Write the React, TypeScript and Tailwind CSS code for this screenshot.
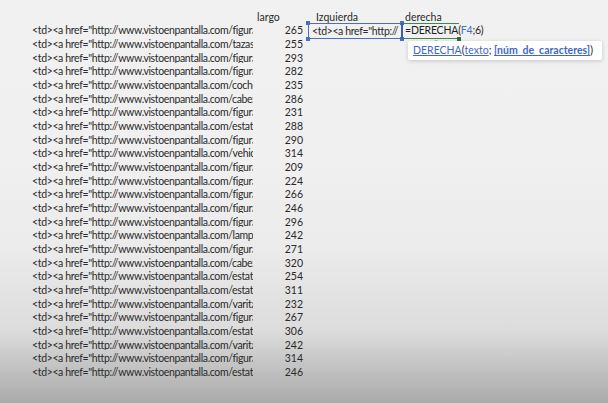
import React from "react";

const rows: [string, number][] = [
  ["figura", 265],
  ["tazas", 255],
  ["figura", 293],
  ["figura", 282],
  ["coche", 235],
  ["cabez", 286],
  ["figura", 231],
  ["estat", 288],
  ["figura", 290],
  ["vehic", 314],
  ["figura", 209],
  ["figura", 224],
  ["figura", 266],
  ["figura", 246],
  ["figura", 296],
  ["lamp", 242],
  ["figura", 271],
  ["cabez", 320],
  ["estat", 254],
  ["estat", 311],
  ["varita", 232],
  ["figura", 267],
  ["estat", 306],
  ["varita", 242],
  ["figura", 314],
  ["estat", 246],
];

const Sq = ({ cls }: { cls: string }) => (
  <span className={"absolute w-[4px] h-[4px] " + cls} />
);

export default function App() {
  return (
    <div className="relative w-[608px] h-[403px] overflow-hidden font-['Lato','Liberation_Sans',sans-serif] text-[10.5px] leading-none text-[#2a2a2a] bg-[linear-gradient(180deg,#f1f1f1_0%,#f0f0f0_40%,#ebebeb_62%,#dcdcdc_82%,#aaaaaa_100%)]">
      <div className="pt-[10px] pl-[32px]">
        <div className="grid grid-cols-[221px_55px_94px_160px] h-[13.68px] items-center">
          <div />
          <div className="pl-[4px]">largo</div>
          <div className="pl-[8px]">Izquierda</div>
          <div className="pl-[3px]">derecha</div>
        </div>
        {rows.map(([s, n], i) => (
          <div
            key={i}
            className="grid grid-cols-[221px_55px_94px_160px] h-[13.68px] items-center"
          >
            <div className="overflow-hidden whitespace-nowrap tracking-[-0.36px]">
              {'<td><a href="http://www.vistoenpantalla.com/' + s + 'a'}
            </div>
            <div className="text-right pr-[5px]">{n}</div>
            {i === 0 ? (
              <>
                <div className="relative h-full">
                  <div className="absolute left-0 right-0 -top-[1px] -bottom-[2px] border-[1.5px] border-[#4a6fc0]">
                    <div className="h-full flex items-center pl-[3px] overflow-hidden whitespace-nowrap tracking-[-0.36px]">
                      {'<td><a href="http://'}
                    </div>
                    <Sq cls="-left-[3px] -top-[3px] bg-[#4a6fc0]" />
                    <Sq cls="-left-[3px] -bottom-[3px] bg-[#4a6fc0]" />
                    <Sq cls="-right-[3px] -top-[3px] bg-[#4a6fc0]" />
                    <Sq cls="-right-[3px] -bottom-[3px] bg-[#4a6fc0]" />
                  </div>
                </div>
                <div className="relative h-full">
                  <div className="absolute left-0 w-[57px] -top-[1px] -bottom-[2px] border-t-[1.5px] border-b-[1.5px] border-[#3c8a4e]">
                    <span className="absolute -left-[1px] -top-[1px] -bottom-[1px] w-[2px] bg-[#3d5fb3]" />
                    <Sq cls="-right-[2px] -bottom-[3px] bg-[#2f6b3c]" />
                  </div>
                  <div className="absolute left-[3px] top-0 h-full flex items-center whitespace-nowrap text-[#1e1e1e] tracking-[-0.2px]">
                    =DERECHA(<span className="text-[#4a6fc0]">F4</span>;6)
                  </div>
                  <div className="absolute left-[32px] top-[15px] text-[7px] text-[#555]">⌶</div>
                </div>
              </>
            ) : (
              <>
                <div />
                <div />
              </>
            )}
          </div>
        ))}
      </div>

      <div className="absolute left-[408px] top-[41px] w-[194px] h-[19px] bg-white rounded-[2px] shadow-[0_1px_4px_rgba(0,0,0,0.18)] flex items-center pl-[5px] whitespace-nowrap text-[10.5px] text-[#222]">
        <span className="text-[#3f68c7] underline">DERECHA</span>
        <span>(</span>
        <span className="text-[#3f68c7] underline">texto</span>
        <span>;&nbsp;</span>
        <span className="text-[#3f68c7] underline font-bold">[núm_de_caracteres]</span>
        <span>)</span>
      </div>
    </div>
  );
}
